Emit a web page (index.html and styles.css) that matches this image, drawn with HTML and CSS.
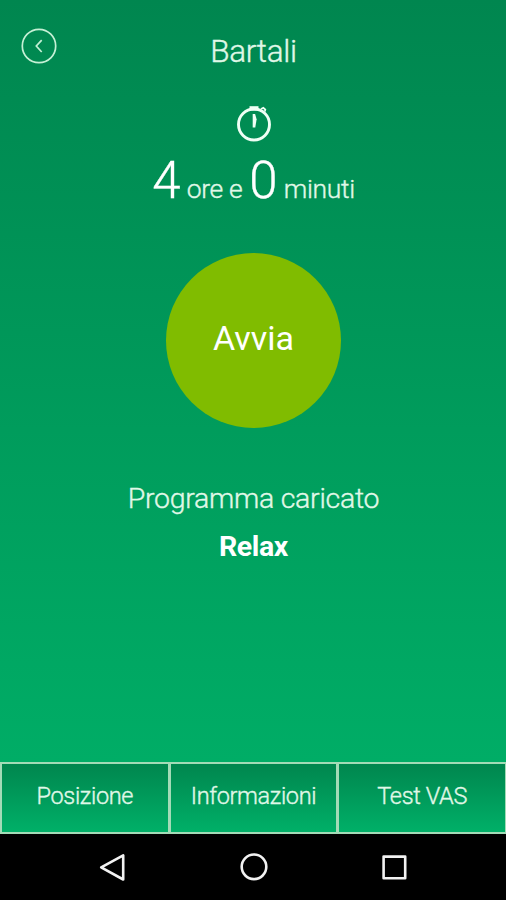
FILE: index.html
```html
<!DOCTYPE html>
<html lang="it">
<head>
<meta charset="utf-8">
<title>Bartali</title>
<link rel="stylesheet" href="styles.css">
</head>
<body>
<main class="screen">
  <header class="header">
    <svg class="back" viewBox="0 0 36 36"><circle cx="18" cy="18" r="16.7"/><path d="M20.7 12.2 15.3 18l5.4 6"/></svg>
    <h1 class="title">Bartali</h1>
  </header>
  <svg class="timer" viewBox="0 0 38 40"><circle cx="19" cy="20.5" r="15.5"/><path class="cap" d="M14.5 2.2h9v4.4h-9z"/><path class="knob" d="m26 5 2.3-1.2 2 1.8-.5 2"/><path class="hand" d="M17.7 10h2.4l1.5 5.2-1.3 8.2h-2.6z"/></svg>
  <p class="duration"><span class="num">4</span> <span class="ore">ore e</span> <span class="num">0</span> <span class="min">minuti</span></p>
  <button class="start">Avvia</button>
  <section class="program">
    <p class="label">Programma caricato</p>
    <p class="name">Relax</p>
  </section>
  <nav class="tabs">
    <a class="tab">Posizione</a>
    <a class="tab">Informazioni</a>
    <a class="tab">Test VAS</a>
  </nav>
</main>
<footer class="system">
  <svg viewBox="0 0 30 30"><path d="M25.2 3.3v24.2L3.2 15.3z"/></svg>
  <svg viewBox="0 0 30 30"><circle cx="15" cy="14.8" r="12.3"/></svg>
  <svg viewBox="0 0 30 30"><path d="M4.6 4.6h21.6v21.6H4.6z"/></svg>
</footer>
</body>
</html>
```
FILE: styles.css
```css
* { box-sizing: border-box; }
body {
  margin: 0;
  width: 506px;
  height: 900px;
  overflow: hidden;
  background: #000;
  color: #e0f8e8;
  font-family: Roboto, sans-serif;
  font-weight: 300;
  -webkit-text-stroke: 0.35px;
}
h1, p { margin: 0; font-weight: 300; }
.screen {
  height: 834px;
  display: flex;
  flex-direction: column;
  align-items: center;
  background: linear-gradient(#00864f, #00ad66 762px);
}
.header {
  width: 100%;
  height: 104px;
  display: grid;
  grid-template-columns: 57px 1fr 56px;
  align-items: start;
}
.back {
  width: 36px;
  height: 36px;
  margin: 28px 0 0 21px;
  fill: none;
  stroke: #c5f0d5;
  stroke-width: 1.7;
}
.title {
  margin-top: 32px;
  text-align: center;
  font-size: 31.5px;
  line-height: 40px;
  letter-spacing: -0.3px;
}
.timer {
  width: 38px;
  height: 40px;
  margin-left: 2px;
  fill: none;
  stroke: #effff5;
  stroke-width: 2.9;
}
.timer .cap, .timer .hand { fill: #effff5; stroke: none; }
.timer .knob { stroke-width: 1.8; }
.duration {
  height: 60px;
  margin: 7px 0 0 1px;
  display: flex;
  align-items: baseline;
  justify-content: center;
  gap: 7px;
  font-size: 26.5px;
  line-height: 60px;
  letter-spacing: -0.35px;
  white-space: nowrap;
}
.num { font-size: 51px; letter-spacing: -0.8px; color: #fff; }
.start {
  width: 175px;
  height: 175px;
  margin: 42px 0 0 1px;
  padding: 0 0 6px;
  border: 0;
  border-radius: 50%;
  background: #80bc00;
  color: #fff;
  font: 400 34px Roboto, sans-serif;
  -webkit-text-stroke: 0;
}
.program {
  margin: 47px 0 0 1px;
  text-align: center;
}
.label { font-size: 28.5px; line-height: 48px; letter-spacing: -0.28px; }
.name {
  color: #fff;
  font-size: 28.5px;
  font-weight: 700;
  line-height: 48px;
  letter-spacing: -0.4px;
  -webkit-text-stroke: 0;
}
.tabs {
  width: 100%;
  height: 72px;
  margin-top: auto;
  padding: 1px 0 1px 1px;
  display: grid;
  grid-template-columns: repeat(3, 1fr);
  gap: 1px;
  background: #a3dbb7;
}
.tab {
  border: 1px solid #a3dbb7;
  background: linear-gradient(#00864e, #00b068);
  background-clip: padding-box;
  text-align: center;
  font-size: 23.5px;
  line-height: 64px;
  letter-spacing: -0.35px;
}
.system {
  height: 66px;
  padding: 0 97px 0 98px;
  display: flex;
  align-items: center;
  justify-content: space-between;
}
.system svg {
  width: 30px;
  height: 30px;
  fill: none;
  stroke: #f2f2f2;
  stroke-width: 2.6;
  stroke-linejoin: round;
}
```
